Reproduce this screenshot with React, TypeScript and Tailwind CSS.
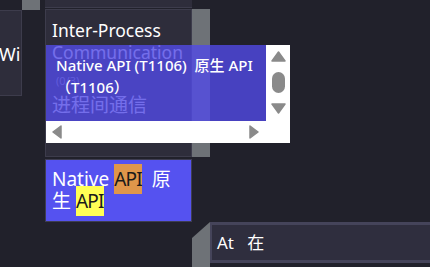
import React from "react";

const FONT = { fontFamily: '"Noto Sans", "Noto Sans CJK SC", sans-serif' };

function Tri({ dir, className }: { dir: "up" | "down" | "left" | "right"; className: string }) {
  const pts: Record<string, string> = {
    up: "7.5,1 14,10 1,10",
    down: "1,1 14,1 7.5,10",
    left: "9,1 9,13 1,7",
    right: "1,1 1,13 9,7",
  };
  const vb = dir === "up" || dir === "down" ? "0 0 15 11" : "0 0 10 14";
  return (
    <svg viewBox={vb} className={className}>
      <polygon points={pts[dir]} fill="#8a8a8a" stroke="#8a8a8a" strokeWidth="1.5" strokeLinejoin="round" />
    </svg>
  );
}

export default function App() {
  return (
    <div className="relative w-[430px] h-[267px] overflow-hidden bg-[#21212b] text-white" style={FONT}>
      <div className="flex h-full">
        {/* column 1 */}
        <div className="w-[22px] pt-[10px]">
          <div className="h-[86px] bg-[#2e2d3b] border-y border-r border-[#3d3c4c] flex items-center">
            <span className="text-[18px] leading-none ml-[-1px] mt-[2px] whitespace-nowrap">Wi</span>
          </div>
        </div>
        {/* gray block */}
        <div className="w-[18px] h-[10px] bg-[#6e7277]" />
        <div className="w-[5px]" />
        {/* column 3 */}
        <div className="w-[147px] flex flex-col">
          <div className="h-[8px] bg-[#2e2d3b] border-b border-[#3d3c4c]" />
          <div className="h-[1px]" />
          <div className="h-[148px] bg-[#2e2d3b] border border-[#3d3c4c] pl-[6px] pt-[9px]">
            <div className="text-[17.5px] leading-[22px]">Inter-Process</div>
            <div className="text-[17.5px] leading-[22px]">Communication</div>
            <div className="text-[11px] leading-[18px] mt-[9px] ml-[4px] text-[#a3a3b3]">(0/3)</div>
            <div className="text-[19px] leading-[24px] mt-[3px]">进程间通信</div>
          </div>
          <div className="h-[2px]" />
          <div className="h-[63px] bg-[#5552f0] border border-[#3e3d52] pl-[6px] pt-[8px] text-[19px] leading-[22px]">
            <div className="whitespace-nowrap">
              Native <span className="bg-[#e0964a] text-[#1a1a1a] py-[2px] tracking-[-0.8px]">API</span>
              {"\u00a0\u00a0"}原
            </div>
            <div className="whitespace-nowrap">
              生 <span className="bg-[#ffff55] text-[#1a1a1a] py-[2px] tracking-[-0.8px]">API</span>
            </div>
          </div>
        </div>
        {/* gray column */}
        <div className="w-[18px] flex flex-col">
          <div className="h-[9px]" />
          <div className="h-[148px] bg-[#6e7277]" />
          <div className="h-[65px]" />
          <div className="flex-1 bg-[#6e7277] [clip-path:polygon(0_16px,100%_0,100%_100%,0_100%)]" />
        </div>
        {/* column 5 */}
        <div className="flex-1 flex flex-col">
          <div className="h-[222px]" />
          <div className="h-[41px] bg-[#2f2e3e] border-y-[3px] border-l-[2px] border-[#45445a] pl-[5px] flex items-center">
            <span className="text-[17px] leading-none whitespace-nowrap">At&nbsp;&nbsp;&nbsp;在</span>
          </div>
        </div>
      </div>

      {/* tooltip */}
      <div className="absolute left-[46px] top-[45px] w-[244px] h-[98px] flex flex-col">
        <div className="flex h-[76px]">
          <div className="w-[220px] bg-[rgba(81,74,230,0.8)] pl-[10px] pt-[9px] overflow-hidden">
            <div className="text-[15px] leading-[22px] font-medium whitespace-nowrap">Native API (T1106)&nbsp;&nbsp;原生 API</div>
            <div className="text-[15px] leading-[22px] font-medium whitespace-nowrap">（T1106）</div>
          </div>
          <div className="w-[24px] bg-white flex flex-col items-center pt-[6px]">
            <Tri dir="up" className="w-[15px] h-[11px]" />
            <div className="w-[13px] h-[21px] rounded-full bg-[#8a8a8a] mt-[10px]" />
            <Tri dir="down" className="w-[15px] h-[11px] mt-[10px]" />
          </div>
        </div>
        <div className="h-[22px] bg-white flex items-center justify-between pl-[6px] pr-[31px]">
          <Tri dir="left" className="w-[10px] h-[14px]" />
          <Tri dir="right" className="w-[10px] h-[14px]" />
        </div>
      </div>
    </div>
  );
}
